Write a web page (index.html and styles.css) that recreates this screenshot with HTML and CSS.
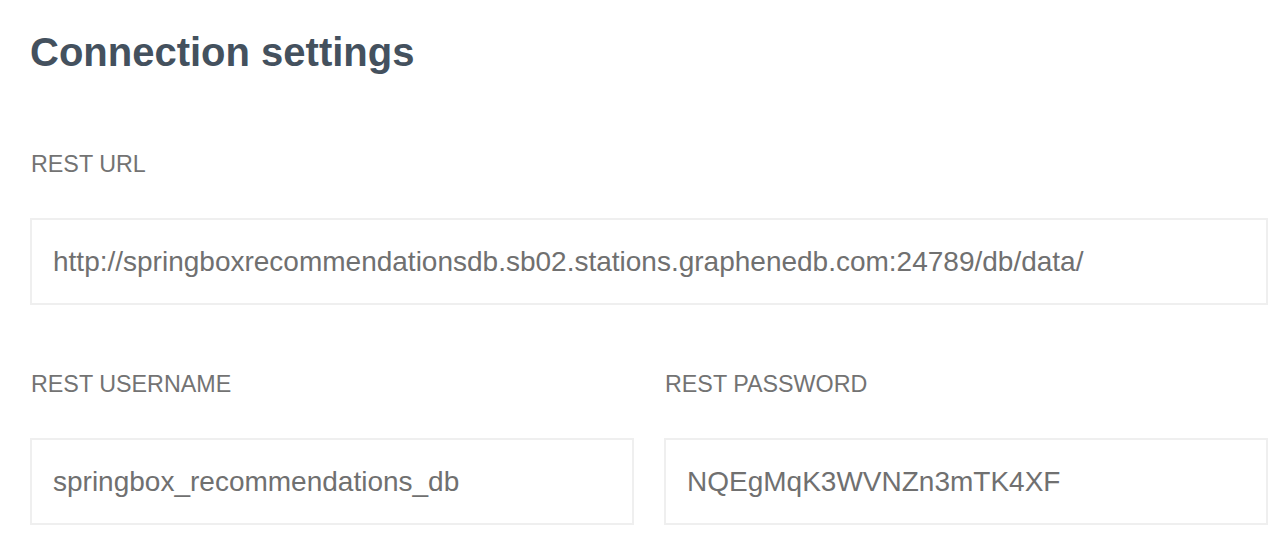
FILE: index.html
```html
<!DOCTYPE html>
<html>
<head>
<meta charset="utf-8">
<link rel="stylesheet" href="styles.css">
</head>
<body>
<div class="page">
  <h1 class="title">Connection settings</h1>
  <div class="field">
    <label class="label">REST URL</label>
    <div class="input">http://springboxrecommendationsdb.sb02.stations.graphenedb.com:24789/db/data/</div>
  </div>
  <div class="row">
    <div class="field">
      <label class="label">REST USERNAME</label>
      <div class="input">springbox_recommendations_db</div>
    </div>
    <div class="field">
      <label class="label">REST PASSWORD</label>
      <div class="input">NQEgMqK3WVNZn3mTK4XF</div>
    </div>
  </div>
</div>
</body>
</html>
```
FILE: styles.css
```css
html, body {
  margin: 0;
  padding: 0;
  background: #ffffff;
}
.page {
  padding: 28px 18px 0 30px;
  font-family: "Liberation Sans", Arial, Helvetica, sans-serif;
}
.title {
  margin: 0;
  font-size: 40px;
  font-weight: 700;
  color: #44515e;
  line-height: 48px;
}
.field {
  display: flex;
  flex-direction: column;
}
.field:first-of-type {
  margin-top: 75px;
}
.label {
  font-size: 23.3px;
  color: #737373;
  line-height: 26px;
  margin-left: 1px;
}
.input {
  margin-top: 41px;
  height: 83px;
  border: 2px solid #efefef;
  box-sizing: content-box;
  padding: 0 21px;
  display: flex;
  align-items: center;
  font-size: 28px;
  line-height: 32px;
  color: #707070;
}
.row {
  margin-top: 66px;
  display: flex;
  gap: 30px;
}
.row .field {
  flex: 1;
  margin-top: 0;
}
```
